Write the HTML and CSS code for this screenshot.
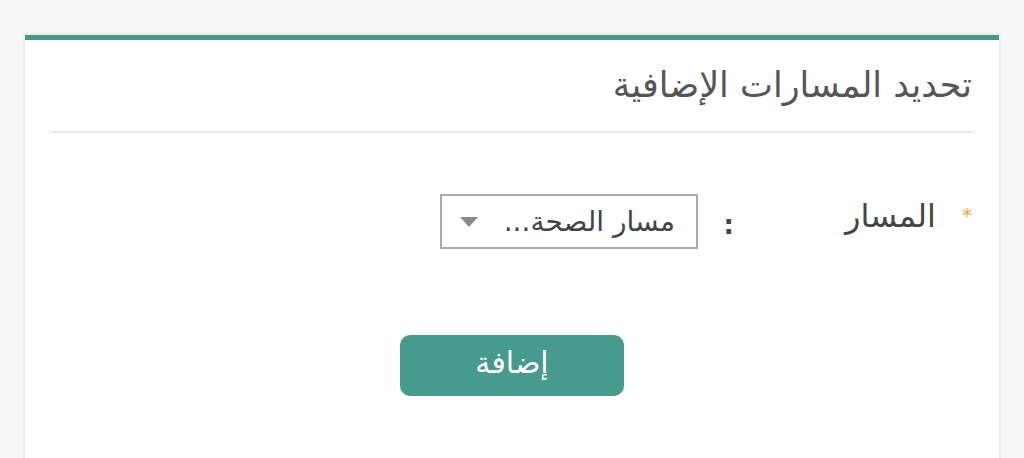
FILE: index.html
```html
<!DOCTYPE html>
<html lang="ar" dir="rtl">
<head>
  <meta charset="UTF-8">
  <meta name="viewport" content="width=device-width, initial-scale=1.0">
  <link rel="stylesheet" href="styles.css">
</head>
<body>
  <div class="card">
    <div class="card-header">
      <h2 class="card-title">تحديد المسارات الإضافية</h2>
    </div>
    <div class="form-row">
      <div class="form-label">
        <span class="required">*</span>
        <span class="label-text">المسار</span>
      </div>
      <span class="colon">:</span>
      <div class="select-box">
        <span class="select-value">مسار الصحة...</span>
        <span class="select-arrow"></span>
      </div>
    </div>
    <div class="actions">
      <button class="btn-add" type="button">إضافة</button>
    </div>
  </div>
</body>
</html>
```

FILE: styles.css
```css
body {
  margin: 0;
  padding: 35px 25px 0;
  background-color: #f6f5f8;
  font-family: 'DejaVu Sans', 'Noto Sans', sans-serif;
  direction: rtl;
  height: 100vh;
  box-sizing: border-box;
  overflow: hidden;
}

.card {
  width: 974px;
  min-height: 440px;
  background-color: #ffffff;
  border-top: 5px solid #47998c;
  box-shadow: 0 0 3px 1px rgba(0, 0, 0, 0.08);
  padding: 0 25px;
  box-sizing: border-box;
}

.card-header {
  border-bottom: 2px solid #e8e8e8;
  padding: 22px 2px 23px 0;
}

.card-title {
  margin: 0;
  font-size: 35px;
  font-weight: normal;
  color: #555558;
  line-height: 46px;
}

.form-row {
  display: flex;
  align-items: center;
  margin-top: 61px;
}

.form-label {
  display: flex;
  align-items: center;
  width: 240px;
}

.required {
  color: #f0a63a;
  font-size: 20px;
  margin: -14px 0 0 26px;
  padding-right: 2px;
}

.label-text {
  font-size: 32px;
  color: #444;
  margin-top: -12px;
}

.colon {
  font-size: 26px;
  font-weight: bold;
  color: #444;
  width: 16px;
  margin-left: 20px;
  margin-top: 6px;
}

.select-box {
  width: 258px;
  height: 55px;
  border: 2px solid #aaaaaa;
  box-sizing: border-box;
  display: flex;
  align-items: center;
  justify-content: space-between;
  padding: 0 21px 0 18px;
}

.select-value {
  font-size: 28px;
  color: #444;
}

.select-arrow {
  width: 0;
  height: 0;
  border-left: 9px solid transparent;
  border-right: 9px solid transparent;
  border-top: 10px solid #8a8a8a;
}

.actions {
  display: flex;
  justify-content: center;
  margin-top: 86px;
}

.btn-add {
  width: 224px;
  height: 61px;
  border: none;
  border-radius: 10px;
  background-color: #479a8e;
  color: #ffffff;
  font-family: inherit;
  font-size: 30px;
  padding: 0 0 6px;
}
```
